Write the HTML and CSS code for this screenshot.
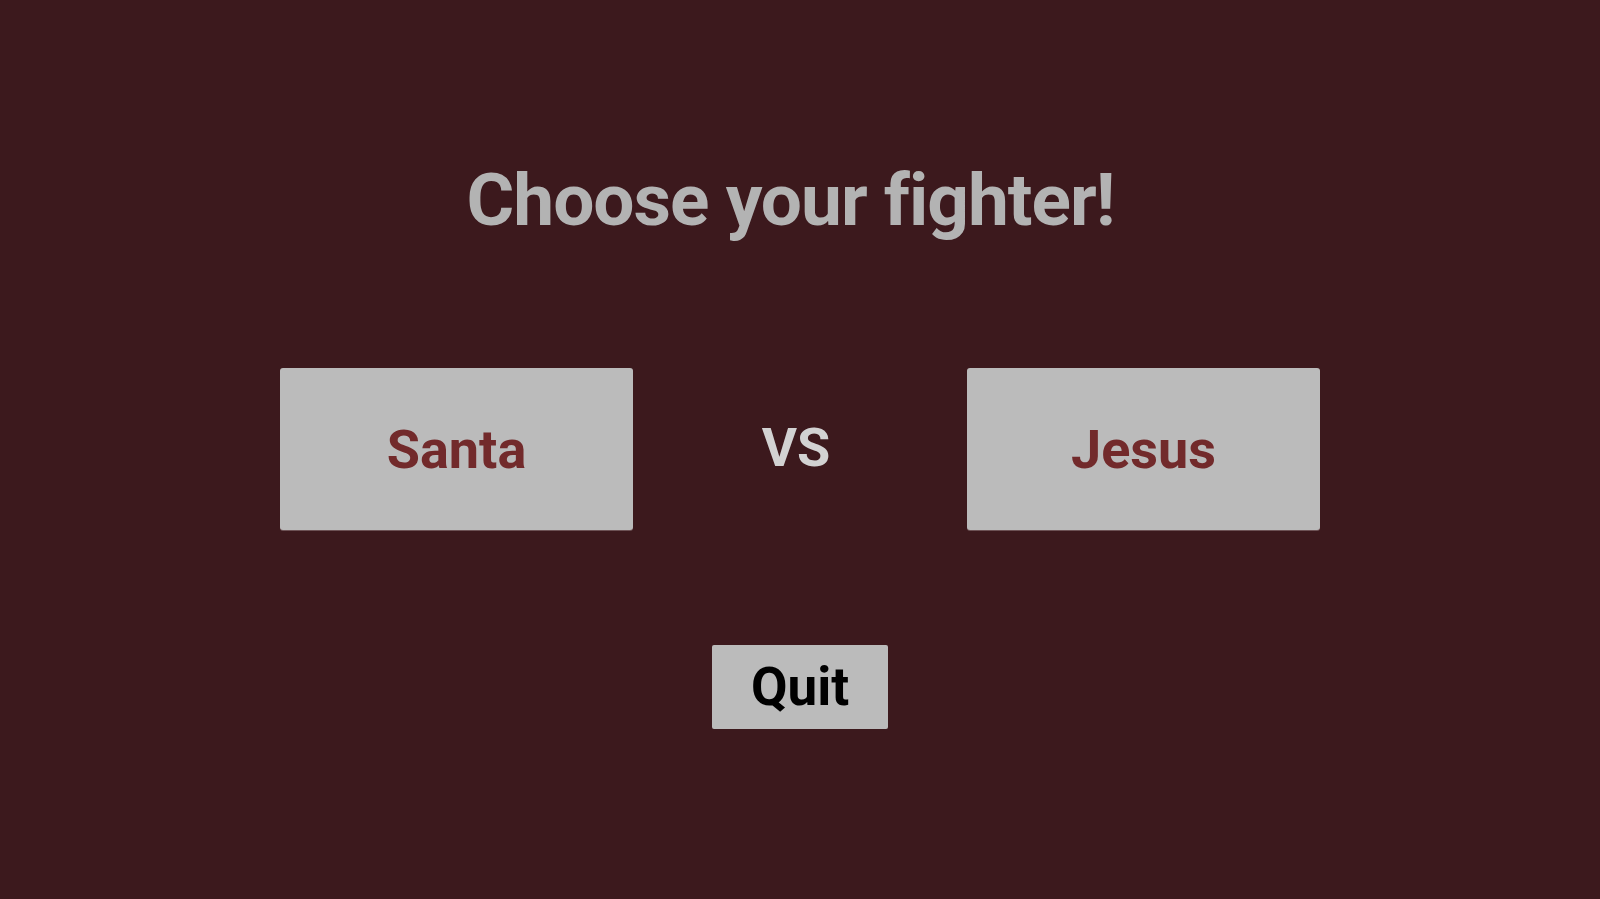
FILE: index.html
```html
<!DOCTYPE html>
<html>
<head>
<meta charset="utf-8">
<link rel="stylesheet" href="styles.css">
</head>
<body>
<main class="screen">
  <h1 class="title">Choose your fighter!</h1>
  <div class="matchup">
    <button class="fighter">Santa</button>
    <span class="vs">VS</span>
    <button class="fighter">Jesus</button>
  </div>
  <button class="quit">Quit</button>
</main>
</body>
</html>
```
FILE: styles.css
```css
html, body {
  margin: 0;
  padding: 0;
  background: #3c191d;
}
.screen {
  width: 1600px;
  height: 899px;
  display: flex;
  flex-direction: column;
  align-items: center;
  font-family: Roboto, "Liberation Sans", sans-serif;
  font-variant-ligatures: none;
}
.title {
  margin: 164px 19px 0 0;
  font-size: 73px;
  line-height: 73px;
  font-weight: 700;
  letter-spacing: -1px;
  color: #b3b3b3;
}
.matchup {
  margin-top: 131px;
  display: flex;
  align-items: center;
}
.fighter {
  width: 353px;
  height: 162px;
  border: none;
  border-radius: 3px;
  background: #bbbbbb;
  box-shadow: 0 1px 0 rgba(255,255,255,0.25);
  color: #722a2b;
  font-family: Roboto, "Liberation Sans", sans-serif;
  font-weight: 700;
  font-size: 54px;
  padding: 0;
  cursor: pointer;
}
.vs {
  width: 334px;
  box-sizing: border-box;
  padding-right: 8px;
  text-align: center;
  font-size: 54px;
  line-height: 1;
  font-weight: 700;
  color: #d2d2d2;
  margin-top: -2px;
}
.quit {
  margin-top: 115px;
  width: 176px;
  height: 84px;
  border: none;
  border-radius: 2px;
  background: #bbbbbb;
  color: #000;
  font-family: Roboto, "Liberation Sans", sans-serif;
  font-weight: 700;
  font-size: 53px;
  padding: 0;
  cursor: pointer;
}
```
